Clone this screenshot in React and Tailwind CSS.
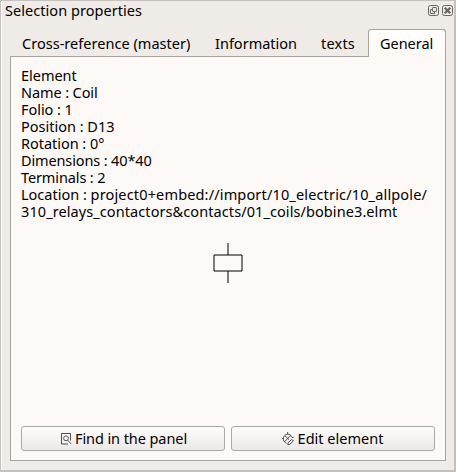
const details = [
  ["Element", "", "tracking-[-0.02px]"],
  ["Name : Coil", "", "tracking-[-0.1px]"],
  ["Folio : 1", "", "tracking-[-0.05px]"],
  ["Position : D13", "", "tracking-[0px]"],
  ["Rotation : 0°", "", "tracking-[-0.03px]"],
  ["Dimensions : 40*40", "", "tracking-[-0.13px]"],
  ["Terminals : 2", "", "tracking-[-0.12px]"],
  ["Location : ", "project0+embed://import/10_electric/10_allpole/", "tracking-[0.155px]"],
  ["", "310_relays_contactors&contacts/01_coils/bobine3.elmt", "tracking-[0.085px]"],
];

function FloatIcon() {
  return (
    <svg width="11" height="11" viewBox="0 0 11 11" fill="none" stroke="#686563">
      <rect x=".5" y=".5" width="10" height="10" rx="2" />
      <rect x="4.5" y="2.5" width="4" height="4" rx=".6" />
      <path d="M4 4.5H2.5v4h4V7" />
    </svg>
  );
}

function CloseIcon() {
  return (
    <svg width="11" height="11" viewBox="0 0 11 11" fill="none" stroke="#686563">
      <rect x=".5" y=".5" width="10" height="10" rx="2" />
      <path d="M2.7 2.7l5.6 5.6M8.3 2.7L2.7 8.3" strokeWidth="2.2" />
    </svg>
  );
}

function FindIcon() {
  return (
    <svg width="11" height="12" viewBox="0 0 11 12" fill="none" stroke="#4c4c4c">
      <path d="M9.5 7.5V.5h-9v10.500H7" />
      <circle cx="5" cy="5.300" r="2.4" strokeWidth=".9" />
      <path d="M6.700 7.200l3.300 3.600" />
    </svg>
  );
}

function EditIcon() {
  return (
    <svg width="12" height="14" viewBox="0 0 12 14" fill="none" stroke="#4c4c4c" strokeWidth="1">
      <path d="M4.500 11.100A4.500 4.500 0 1 1 10.100 5.500M5.700 0v2M0 6.500h1.500M10 5.500h1.500M2.600 3.300l4.400 4.400M8.900 3.300L2.600 9.600" />
      <path d="M5.800 12.800l.4-2.200 3.700-3.200 1.500 1.600-3.500 3.300z" />
    </svg>
  );
}

function PanelButton({ icon, children }) {
  return (
    <button className="flex h-[25px] flex-1 items-center justify-center rounded-[3px] border border-[#aaa7a4] bg-linear-to-b from-[#fdfdfc] to-[#ebe9e8] whitespace-nowrap">
      {icon}
      {children}
    </button>
  );
}

export default function App() {
  return (
    <div className="flex h-[472px] w-[456px] flex-col border-t border-r-2 border-b-2 border-l border-[#c5c1be] bg-[#efebe7] font-['Noto_Sans','Open_Sans',sans-serif] text-[14.5px] leading-[17px] text-black">
      <header className="flex h-[28px] shrink-0 justify-between border-l border-white pt-px pl-[3px]">
        <h1 className="tracking-[0.05px] whitespace-nowrap">Selection properties</h1>
        <div className="flex gap-[3px] pt-[3px] pr-px">
          <FloatIcon />
          <CloseIcon />
        </div>
      </header>
      <nav className="z-10 flex h-[27px] shrink-0 border-l border-white pl-[8px] whitespace-nowrap">
        <div className="w-[194px] pt-[6px] pl-[12px] tracking-[0.03px]">Cross-reference (master)</div>
        <div className="w-[106px] pt-[6px] pl-[11px]">Information</div>
        <div className="w-[58px] pt-[6px] pl-[11px] tracking-[0.2px]">texts</div>
        <div className="h-[28px] w-[78px] rounded-t-[3px] border border-b-0 border-[#a8a4a1] bg-linear-to-b from-white to-[#fdf9f6] pt-[5px] pl-[11px] tracking-[-0.03px]">General</div>
      </nav>
      <div className="flex flex-1 border-l border-white pb-[9px] pl-[8px]">
        <main className="flex w-[436px] flex-col border border-[#a8a4a1] bg-[#fdf9f6] px-[10px] pt-[10px] pb-[9px]">
          <div className="whitespace-nowrap">
            {details.map(([text, path, tracking]) => (
              <p key={text + path} className={path ? "" : tracking}>
                {text}
                {path && <span className={tracking}>{path}</span>}
              </p>
            ))}
          </div>
          <div className="flex flex-1 justify-center pt-[23px]">
            <svg width="30" height="41" viewBox="0 0 30 41" fill="none" stroke="#000" strokeWidth="1">
              <path d="M1 12h28v16H1zM15 0v12M15 28v12" />
            </svg>
          </div>
          <div className="flex gap-[6px]">
            <PanelButton icon={<FindIcon />}><span className="-mr-[2px] ml-[3px] tracking-[-0.08px]">Find in the panel</span></PanelButton>
            <PanelButton icon={<EditIcon />}><span className="mr-px ml-[4px]">Edit element</span></PanelButton>
          </div>
        </main>
      </div>
    </div>
  );
}
